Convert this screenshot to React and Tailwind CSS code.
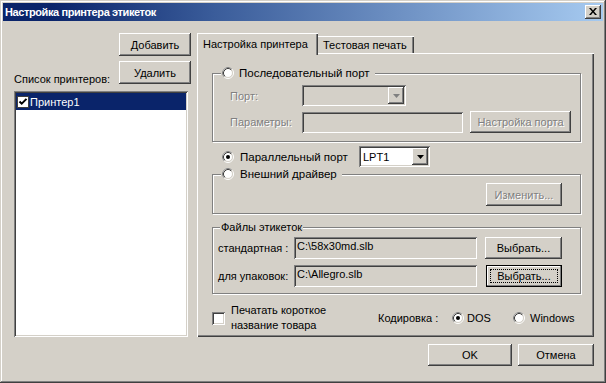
import React from "react";

const RAISED = "shadow-[inset_-1px_-1px_#404040,inset_1px_1px_#ffffff,inset_-2px_-2px_#808080,inset_2px_2px_#d4d0c8]";
const SUNKEN = "shadow-[inset_1px_1px_#808080,inset_-1px_-1px_#ffffff,inset_2px_2px_#404040,inset_-2px_-2px_#d4d0c8]";
const DIS = "text-[#808080] [text-shadow:1px_1px_0_#ffffff]";

function Btn({ w, h, children, disabled, focused }) {
  if (focused) {
    return (
      <div className={`${w} ${h} border border-black bg-[#d4d0c8] shrink-0`}>
        <div className="w-full h-full shadow-[inset_-1px_-1px_#808080,inset_1px_1px_#ffffff] p-[3px]">
          <div className="w-full h-full border border-dotted border-black flex items-center justify-center">
            {children}
          </div>
        </div>
      </div>
    );
  }
  return (
    <div className={`${w} ${h} ${RAISED} bg-[#d4d0c8] shrink-0 flex items-center justify-center whitespace-nowrap ${disabled ? DIS : ""}`}>
      {children}
    </div>
  );
}

function Radio({ checked, disabled }) {
  return (
    <svg width="12" height="12" viewBox="0 0 12 12" className="shrink-0">
      <circle cx="6" cy="6" r="5.5" fill="none" stroke="#ffffff" />
      <path d="M2.11 9.89A5.5 5.5 0 0 1 9.89 2.11" fill="none" stroke="#808080" />
      <circle cx="6" cy="6" r="4.5" fill={disabled ? "#d4d0c8" : "#ffffff"} stroke="#d4d0c8" />
      <path d="M2.82 9.18A4.5 4.5 0 0 1 9.18 2.82" fill="none" stroke="#404040" />
      {checked && <circle cx="6" cy="6" r="2" fill="#000" />}
    </svg>
  );
}

function Arrow({ disabled }) {
  return (
    <svg width="7" height="4" viewBox="0 0 7 4">
      <polygon points="0,0 7,0 3.5,4" fill={disabled ? "#808080" : "#000"} />
    </svg>
  );
}

function Combo({ w, value, disabled }) {
  return (
    <div className={`${w} h-[21px] ${SUNKEN} ${disabled ? "bg-[#d4d0c8]" : "bg-white"} p-[2px] flex shrink-0`}>
      <div className="flex-1 pl-[2px] flex items-center">{value}</div>
      <div className={`w-[16px] h-full ${RAISED} bg-[#d4d0c8] flex items-center justify-center`}>
        <Arrow disabled={disabled} />
      </div>
    </div>
  );
}

function Field({ w, h, children }) {
  return (
    <div className={`${w} ${h} ${SUNKEN} bg-[#d4d0c8] shrink-0 pl-[3px] pt-[2px] leading-[14px]`}>
      {children}
    </div>
  );
}

function Group({ label, className, labelClass, children }) {
  return (
    <div className={`relative border border-[#808080] shadow-[inset_1px_1px_#ffffff,1px_1px_#ffffff] ${className}`}>
      <div className={`absolute top-[-8px] h-[14px] bg-[#d4d0c8] flex items-center whitespace-nowrap ${labelClass}`}>{label}</div>
      {children}
    </div>
  );
}

export default function App() {
  return (
    <div className="w-[606px] h-[383px] bg-[#d4d0c8] p-[3px] flex flex-col text-[11px] leading-[14px] text-black font-['Liberation_Sans',Arial,sans-serif] whitespace-nowrap shadow-[inset_-1px_-1px_#404040,inset_1px_1px_#d4d0c8,inset_-2px_-2px_#808080,inset_2px_2px_#ffffff] overflow-hidden">
      {/* Title bar */}
      <div className="h-[18px] shrink-0 flex items-center justify-between pl-[2px] pr-[2px] bg-[linear-gradient(to_right,#0a246a_8%,#3a5c9a_35%,#a6caf0)]">
        <span className="text-white font-bold text-[11px] tracking-[-0.4px]">Настройка принтера этикеток</span>
        <div className={`w-[16px] h-[14px] ${RAISED} bg-[#d4d0c8] flex items-center justify-center`}>
          <svg width="8" height="7" viewBox="0 0 8 7" className="-mt-[1px]">
            <path d="M0 0h2l2 2.5L6 0h2L5 3.5 8 7H6L4 4.5 2 7H0l3-3.5z" fill="#000" />
          </svg>
        </div>
      </div>

      <div className="flex-1 flex">
        {/* Left column */}
        <div className="w-[190px] shrink-0 flex flex-col pt-[12px] pl-[11px] pr-[2px]">
          <div className="flex justify-end">
            <Btn w="w-[72px]" h="h-[23px]">Добавить</Btn>
          </div>
          <div className="flex justify-between items-end mt-[5px]">
            <span className="-mb-[2px]">Список принтеров:</span>
            <Btn w="w-[72px]" h="h-[23px]">Удалить</Btn>
          </div>
          <div className={`mt-[7px] w-[174px] h-[246px] bg-white ${SUNKEN} p-[2px]`}>
            <div className="h-[17px] bg-[#0a246a] text-white flex items-center pl-[1px] gap-[1px]">
              <svg width="12" height="12" viewBox="0 0 12 12" className="shrink-0">
                <rect x="0.5" y="0.5" width="11" height="11" fill="#ffffff" stroke="#404040" />
                <path d="M2.5 5.5l2.2 2.2 4.8-4.8" stroke="#000" strokeWidth="2" fill="none" />
              </svg>
              <span>Принтер1</span>
            </div>
          </div>
        </div>

        {/* Right column */}
        <div className="ml-[4px] w-[397px] shrink-0 flex flex-col pt-[12px]">
          {/* Tabs */}
          <div className="h-[20px] flex items-end">
            <div className="relative z-10 w-[121px] h-[22px] -mb-[2px] -mr-[2px] bg-[#d4d0c8] pl-[6px] pt-[4px] shadow-[inset_1px_1px_#ffffff,inset_-1px_0_#404040,inset_-2px_0_#808080]">
              Настройка принтера
            </div>
            <div className="w-[98px] h-[17px] pl-[7px] pt-[2px] shadow-[inset_1px_1px_#ffffff,inset_-1px_0_#404040,inset_-2px_0_#808080]">
              Тестовая печать
            </div>
          </div>

          {/* Panel */}
          <div className="h-[284px] pl-[15px] pt-[20px] flex flex-col shadow-[inset_1px_1px_#ffffff,inset_-1px_-1px_#404040,inset_-2px_-2px_#808080]">
            {/* Serial port group */}
            <Group
              className="w-[369px] h-[69px] pt-[11px] pl-[17px]"
              labelClass="left-[8px] pl-[1px] pr-[5px] gap-[5px]"
              label={<><Radio /><span className="text-[11.5px]">Последовательный порт</span></>}
            >
              <div className="flex items-center h-[21px]">
                <span className={`w-[72px] ${DIS}`}>Порт:</span>
                <Combo w="w-[104px]" disabled />
              </div>
              <div className="flex items-center h-[22px] mt-[5px]">
                <span className={`w-[72px] ${DIS}`}>Параметры:</span>
                <Field w="w-[161px]" h="h-[21px]" />
                <div className="ml-[7px]">
                  <Btn w="w-[101px]" h="h-[22px]" disabled>Настройка порта</Btn>
                </div>
              </div>
            </Group>

            {/* Parallel port row */}
            <div className="mt-[4px] h-[21px] flex items-center pl-[10px]">
              <Radio checked />
              <span className="ml-[6px] w-[119px] text-[11.5px]">Параллельный порт</span>
              <Combo w="w-[71px]" value="LPT1" />
            </div>

            {/* External driver group */}
            <Group
              className="mt-[7px] w-[369px] h-[40px] pt-[8px] pr-[18px] flex justify-end items-start"
              labelClass="left-[8px] pl-[1px] pr-[5px] gap-[6px]"
              label={<><Radio /><span className="text-[11.5px]">Внешний драйвер</span></>}
            >
              <Btn w="w-[76px]" h="h-[23px]" disabled>Изменить...</Btn>
            </Group>

            {/* Label files group */}
            <Group
              className="mt-[13px] w-[369px] h-[67px] pt-[9px] pl-[5px]"
              labelClass="left-[7px] px-[1px]"
              label={<span>Файлы этикеток</span>}
            >
              <div className="flex items-center h-[22px]">
                <span className="w-[76px]">стандартная :</span>
                <Field w="w-[183px]" h="h-[22px]">{"C:\\58x30md.slb"}</Field>
                <div className="ml-[8px]">
                  <Btn w="w-[77px]" h="h-[22px]">Выбрать...</Btn>
                </div>
              </div>
              <div className="flex items-center h-[22px] mt-[6px]">
                <span className="w-[76px]">для упаковок:</span>
                <Field w="w-[183px]" h="h-[22px]">{"C:\\Allegro.slb"}</Field>
                <div className="ml-[9px]">
                  <Btn w="w-[76px]" h="h-[22px]" focused>Выбрать...</Btn>
                </div>
              </div>
            </Group>

            {/* Bottom options */}
            <div className="mt-[9px] h-[30px] flex items-center">
              <div className={`w-[13px] h-[13px] bg-white ${SUNKEN} shrink-0`} />
              <span className="ml-[6px] w-[147px] leading-[15px]">
                Печатать короткое
                <br />
                название товара
              </span>
              <span className="w-[74px]">Кодировка :</span>
              <Radio checked />
              <span className="ml-[3px] w-[46px]">DOS</span>
              <Radio />
              <span className="ml-[5px]">Windows</span>
            </div>
          </div>

          {/* OK / Cancel */}
          <div className="mt-[7px] flex justify-end gap-[6px]">
            <Btn w="w-[84px]" h="h-[22px]">OK</Btn>
            <Btn w="w-[76px]" h="h-[22px]">Отмена</Btn>
          </div>
        </div>
      </div>
    </div>
  );
}
